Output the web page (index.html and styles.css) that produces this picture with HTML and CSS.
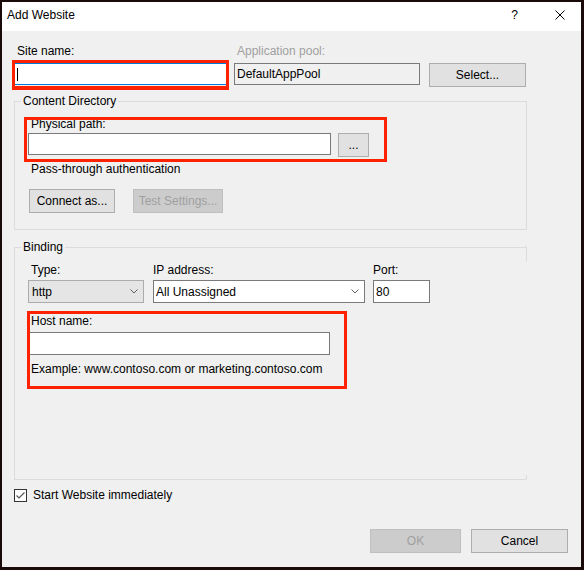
FILE: index.html
```html
<!DOCTYPE html>
<html lang="en">
<head>
  <meta charset="UTF-8">
  <title>Add Website</title>
  <meta name="viewport" content="width=device-width, initial-scale=1.0">
  <link rel="stylesheet" href="styles.css">
</head>
<body>

  <div class="window">

    <!-- Title bar -->
    <div class="titlebar">
      <span class="title">Add Website</span>
      <span class="help">?</span>
      <svg class="close" width="10" height="10" viewBox="0 0 10 10">
        <path d="M0.5 0.5 L9.5 9.5 M9.5 0.5 L0.5 9.5" stroke="#000" stroke-width="1" fill="none"/>
      </svg>
    </div>

    <div class="dialog">

      <!-- Site name / application pool -->
      <div class="site-row">
        <div class="col-site">
          <div class="label">Site name:</div>
          <div class="field field-focus marked mark-site"><span class="caret"></span></div>
        </div>
        <div class="col-pool">
          <div class="label label-off">Application pool:</div>
          <div class="field field-readonly">DefaultAppPool</div>
        </div>
        <button class="btn btn-select">Select...</button>
      </div>

      <!-- Content directory -->
      <fieldset class="group group-content">
        <legend>Content Directory</legend>
        <div class="group-body">
          <div class="path marked mark-path">
            <div class="label">Physical path:</div>
            <div class="path-row">
              <div class="field field-path"></div>
              <button class="btn btn-browse">...</button>
            </div>
          </div>
          <div class="label pass">Pass-through authentication</div>
          <div class="btn-row">
            <button class="btn btn-connect">Connect as...</button>
            <button class="btn btn-test" disabled>Test Settings...</button>
          </div>
        </div>
      </fieldset>

      <!-- Binding -->
      <fieldset class="group group-binding">
        <legend>Binding</legend>
        <div class="group-body">
          <div class="binding-row">
            <div class="col-type">
              <div class="label">Type:</div>
              <div class="combo combo-list">
                <span>http</span>
                <svg width="8" height="5" viewBox="0 0 8 5"><path d="M0.5 0.5 L4 4 L7.5 0.5" stroke="#606060" fill="none"/></svg>
              </div>
            </div>
            <div class="col-ip">
              <div class="label">IP address:</div>
              <div class="combo">
                <span>All Unassigned</span>
                <svg width="8" height="5" viewBox="0 0 8 5"><path d="M0.5 0.5 L4 4 L7.5 0.5" stroke="#606060" fill="none"/></svg>
              </div>
            </div>
            <div class="col-port">
              <div class="label">Port:</div>
              <div class="field field-port">80</div>
            </div>
          </div>

          <div class="host marked mark-host">
            <div class="label">Host name:</div>
            <div class="field field-host"></div>
            <div class="label example">Example: www.contoso.com or marketing.contoso.com</div>
          </div>
        </div>
      </fieldset>

      <div class="check-row">
        <span class="checkbox">
          <svg width="11" height="11" viewBox="0 0 11 11"><path d="M1.5 5.5 L4 8 L9.5 2.5" stroke="#555" stroke-width="1.2" fill="none"/></svg>
        </span>
        <span>Start Website immediately</span>
      </div>

      <div class="footer">
        <button class="btn btn-ok" disabled>OK</button>
        <button class="btn btn-cancel">Cancel</button>
      </div>

    </div>
  </div>

</body>
</html>
```

FILE: styles.css
```css
* {
  box-sizing: border-box;
}

body {
  margin: 0;
  background: #1b0a0a;
  font-family: "Liberation Sans", Arial, sans-serif;
  font-size: 12px;
  line-height: 16px;
  color: #000;
}

.window {
  width: 584px;
  height: 570px;
  border-style: solid;
  border-color: #1b0a0a;
  border-width: 2px 3px 3px 2px;
  background: #f0f0f0;
  display: flex;
  flex-direction: column;
}

/* title bar */
.titlebar {
  height: 29px;
  background: #fff;
  display: flex;
  align-items: flex-start;
  padding: 5px 16px 0 5px;
}

.title {
  flex: 1;
}

.help {
  margin-right: 37px;
}

.close {
  margin-top: 3px;
}

.dialog {
  flex: 1;
  padding: 12px 13px 0 12px;
}

.label {
  height: 16px;
  white-space: nowrap;
}

/* text boxes */
.field {
  height: 22px;
  border: 1px solid #7a7a7a;
  background: #fff;
  padding: 0 2px;
  display: flex;
  align-items: center;
  white-space: nowrap;
}

.field-focus {
  border-color: #0078d7;
}

.field-readonly {
  background: #f0f0f0;
}

.caret {
  width: 1px;
  height: 13px;
  background: #000;
}

/* buttons */
.btn {
  font: inherit;
  color: #000;
  height: 24px;
  padding: 0;
  border: 1px solid #adadad;
  background: #e1e1e1;
  line-height: 16px;
}

.btn:disabled {
  background: #cccccc;
  border-color: #bfbfbf;
  color: #a0a0a0;
}

/* red annotation boxes */
.marked {
  position: relative;
}

.marked::after {
  content: "";
  position: absolute;
  border: 3px solid #ff2200;
  pointer-events: none;
}

.mark-site::after {
  top: -4px;
  left: -3px;
  right: -3px;
  bottom: -6px;
  border-bottom-width: 4px;
}

.mark-path::after {
  top: 1px;
  left: -4px;
  right: -18px;
  bottom: -5px;
}

.mark-host::after {
  top: -2px;
  left: -1px;
  right: -17px;
  bottom: -12px;
}

/* site row */
.site-row {
  display: flex;
  width: 513px;
}

.site-row .label {
  margin-bottom: 4px;
  padding-left: 3px;
}

.col-site {
  width: 213px;
  margin-right: 7px;
}

.col-pool {
  width: 186px;
  margin-right: 9px;
}

.label-off {
  color: #a0a0a0;
}

.btn-select {
  width: 97px;
  margin-top: 20px;
}

/* group boxes */
.group {
  width: 513px;
  margin: 0;
  padding: 0;
  min-width: 0;
  border: 1px solid #dcdcdc;
}

.group legend {
  margin-left: 6px;
  padding: 0 2px;
  line-height: 16px;
}

.group-body {
  padding-left: 13px;
}

.group-content {
  margin-top: 6px;
}

.group-content .group-body {
  padding-top: 7px;
  padding-bottom: 16px;
}

.path {
  width: 341px;
}

.path .label {
  padding-left: 3px;
  margin-bottom: 1px;
}

.path-row {
  display: flex;
  align-items: flex-start;
  gap: 7px;
}

.field-path {
  width: 303px;
}

.btn-browse {
  width: 31px;
}

.pass {
  margin-top: 4px;
  padding-left: 3px;
}

.btn-row {
  display: flex;
  gap: 18px;
  margin-top: 12px;
  padding-left: 1px;
}

.btn-connect {
  width: 86px;
}

.btn-test {
  width: 90px;
}

/* binding */
.group-binding {
  margin-top: 9px;
  border-right-color: transparent;
}

.group-binding .group-body {
  position: relative;
  padding-top: 7px;
  padding-bottom: 102px;
}

.group-binding .group-body::before,
.group-binding .group-body::after {
  content: "";
  position: absolute;
  right: -1px;
  width: 1px;
  background: #dcdcdc;
}

.group-binding .group-body::before {
  top: -9px;
  height: 16px;
}

.group-binding .group-body::after {
  bottom: 0;
  height: 4px;
}

.binding-row {
  display: flex;
}

.binding-row .label {
  margin-bottom: 2px;
}

.col-type {
  width: 116px;
  margin-right: 9px;
}

.col-type .label {
  padding-left: 3px;
}

.col-ip {
  width: 212px;
  margin-right: 8px;
}

.col-port {
  width: 57px;
}

.combo {
  height: 23px;
  border: 1px solid #7a7a7a;
  background: #fff;
  display: flex;
  align-items: center;
  justify-content: space-between;
  padding: 0 5px 0 2px;
}

.combo-list {
  background: #e5e5e5;
  border-color: #acacac;
  padding-left: 3px;
}

.field-port {
  height: 23px;
}

.host {
  width: 302px;
  margin-top: 10px;
}

.host .label {
  padding-left: 3px;
}

.field-host {
  height: 23px;
  margin-top: 3px;
}

.host .example {
  margin-top: 6px;
}

/* checkbox and footer */
.check-row {
  display: flex;
  align-items: center;
  height: 16px;
  margin-top: 7px;
}

.checkbox {
  width: 13px;
  height: 13px;
  border: 1px solid #333;
  background: #fff;
  margin-right: 6px;
  display: flex;
}

.footer {
  display: flex;
  justify-content: flex-end;
  gap: 10px;
  margin-top: 26px;
}

.btn-ok {
  width: 91px;
}

.btn-cancel {
  width: 97px;
}
```
